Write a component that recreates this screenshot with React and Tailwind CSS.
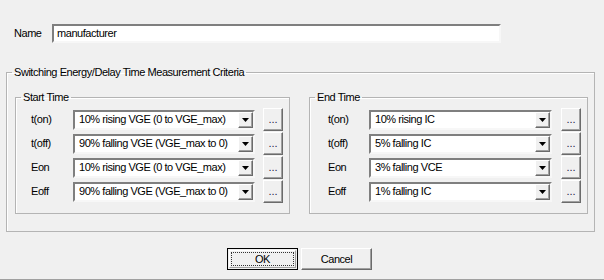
import React from "react";

function Arrow() {
  return (
    <svg width="7" height="4" viewBox="0 0 7 4">
      <polygon points="0,0 7,0 3.5,4" fill="#000" />
    </svg>
  );
}

function Combo({ value, width }) {
  return (
    <div
      className={`${width} h-[20px] bg-white border-2 border-t-[#7f7f7f] border-l-[#7f7f7f] border-r-[#f7f7f7] border-b-[#f7f7f7] flex items-center`}
    >
      <span className="pl-[4px] flex-1 whitespace-nowrap overflow-hidden">{value}</span>
      <div className="w-[15px] h-full bg-[#f0f0f0] border border-t-white border-l-white border-r-[#6b6b6b] border-b-[#6b6b6b] shadow-[inset_-1px_-1px_0_#a0a0a0] flex items-center justify-center">
        <Arrow />
      </div>
    </div>
  );
}

function Dots() {
  return (
    <div className="w-[20px] h-[23px] bg-[#f0f0f0] border border-t-white border-l-white border-r-[#6b6b6b] border-b-[#6b6b6b] shadow-[inset_-1px_-1px_0_#a0a0a0] flex items-center justify-center tracking-[0px] text-[#222244] pb-[1px]">
      ...
    </div>
  );
}

function Group({ title, rows, width, padL, labelW, comboW, gapD, padR, titleML }) {
  return (
    <fieldset className={`${width} border border-[#b4b4b4] shadow-[inset_1px_1px_0_#ffffff] px-0 pb-[10px] min-w-0`}>
      <legend className={`${titleML} px-[2px] leading-[13px]`}>{title}</legend>
      <div className={`${padL} ${padR} pt-[4px] flex flex-col gap-[1px]`}>
        {rows.map(([label, value]) => (
          <div key={label} className="h-[23px] flex items-center">
            <span className={`${labelW} whitespace-nowrap`}>{label}</span>
            <Combo value={value} width={comboW} />
            <div className={gapD} />
            <Dots />
          </div>
        ))}
      </div>
    </fieldset>
  );
}

export default function App() {
  const start = [
    ["t(on)", "10% rising VGE (0 to VGE_max)"],
    ["t(off)", "90% falling VGE (VGE_max to 0)"],
    ["Eon", "10% rising VGE (0 to VGE_max)"],
    ["Eoff", "90% falling VGE (VGE_max to 0)"],
  ];
  const end = [
    ["t(on)", "10% rising IC"],
    ["t(off)", "5% falling IC"],
    ["Eon", "3% falling VCE"],
    ["Eoff", "1% falling IC"],
  ];
  return (
    <div className="w-[604px] h-[280px] bg-[#f0f0f0] border-b border-[#a0a0a0] flex flex-col text-[11px] tracking-[-0.45px] text-black font-['Liberation_Sans',Arial,sans-serif] overflow-hidden">
      <div className="pt-[24px] pl-[14px] flex items-center">
        <span className="w-[38px]">Name</span>
        <div className="w-[449px] h-[19px] bg-white border-2 border-t-[#7f7f7f] border-l-[#7f7f7f] border-r-[#f7f7f7] border-b-[#f7f7f7] flex items-center pl-[3px]">
          manufacturer
        </div>
      </div>
      <fieldset className="ml-[6px] mt-[23px] w-[589px] border border-[#b4b4b4] shadow-[inset_1px_1px_0_#ffffff] px-0 pb-[17px] min-w-0">
        <legend className="ml-[5px] px-[2px] leading-[13px]">
          Switching Energy/Delay Time Measurement Criteria
        </legend>
        <div className="pl-[8px] pt-[12px] flex gap-[19px]">
          <Group
            title="Start Time"
            rows={start}
            width="w-[275px]"
            padL="pl-[15px]"
            padR="pr-[5px]"
            labelW="w-[42px]"
            comboW="w-[182px]"
            gapD="w-[8px]"
            titleML="ml-[5px]"
          />
          <Group
            title="End Time"
            rows={end}
            width="w-[279px]"
            padL="pl-[18px]"
            padR="pr-[6px]"
            labelW="w-[41px]"
            comboW="w-[183px]"
            gapD="w-[9px]"
            titleML="ml-[5px]"
          />
        </div>
      </fieldset>
      <div className="mt-[16px] ml-[227px] flex gap-[3px]">
        <div className="w-[71px] h-[22px] border border-black bg-[#f0f0f0] p-[1px]">
          <div className="w-full h-full border border-t-white border-l-white border-r-[#a0a0a0] border-b-[#a0a0a0] p-[1px]">
            <div className="w-full h-full border border-dotted border-[#333] flex items-center justify-center">
              OK
            </div>
          </div>
        </div>
        <div className="w-[71px] h-[22px] bg-[#f0f0f0] border border-t-white border-l-white border-r-[#6b6b6b] border-b-[#6b6b6b] shadow-[inset_-1px_-1px_0_#a0a0a0] flex items-center justify-center">
          Cancel
        </div>
      </div>
    </div>
  );
}
